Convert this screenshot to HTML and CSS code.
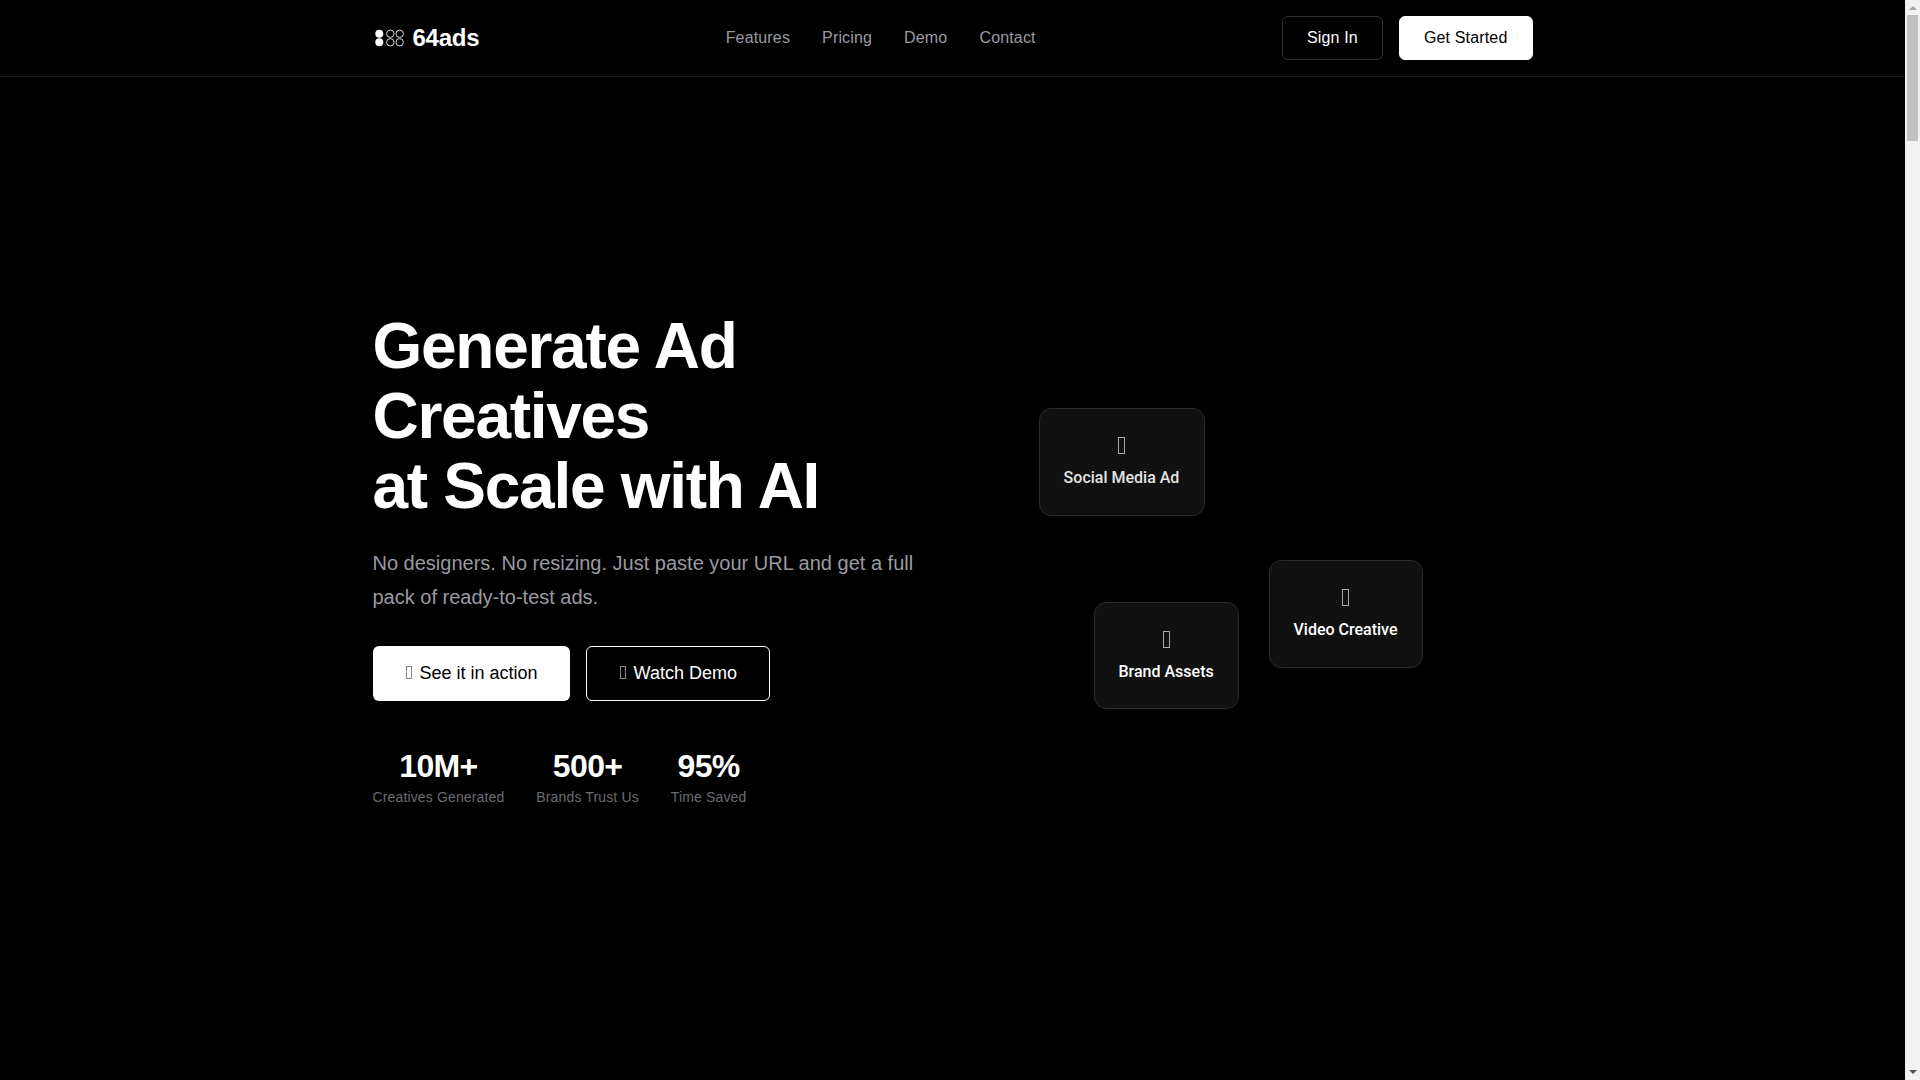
FILE: index.html
```html
<!DOCTYPE html>
<html lang="en">
<head>
  <meta charset="UTF-8">
  <meta name="viewport" content="width=device-width, initial-scale=1.0">
  <title>64ads</title>
  <link rel="stylesheet" href="styles.css">
</head>
<body>

<div class="page">
  <header class="navbar">
    <div class="container nav-inner">
      <a class="logo" href="#">
        <svg class="logo-mark" width="32" height="18" viewBox="0 0 32 18">
          <circle cx="6.3" cy="4.7" r="4" fill="#fff"/>
          <circle cx="6.3" cy="13.3" r="4" fill="#fff"/>
          <circle cx="17.3" cy="4.7" r="3.7" fill="none" stroke="#ddd"/>
          <circle cx="17.3" cy="13.3" r="3.7" fill="none" stroke="#ddd"/>
          <circle cx="26.7" cy="4.7" r="3.7" fill="none" stroke="#ddd"/>
          <circle cx="26.7" cy="13.3" r="3.7" fill="none" stroke="#ddd"/>
        </svg>
        <span>64ads</span>
      </a>
      <nav class="nav-links">
        <a href="#">Features</a>
        <a href="#">Pricing</a>
        <a href="#">Demo</a>
        <a href="#">Contact</a>
      </nav>
      <div class="nav-actions">
        <a class="btn btn-outline" href="#">Sign In</a>
        <a class="btn btn-white" href="#">Get Started</a>
      </div>
    </div>
  </header>

  <section class="hero">
    <div class="container hero-grid">
      <div class="hero-text">
        <h1>Generate Ad Creatives<br>at Scale with AI</h1>
        <p>No designers. No resizing. Just paste your URL and get a full pack of ready-to-test ads.</p>
        <div class="hero-buttons">
          <a class="btn btn-white btn-large" href="#"><i class="icon"></i>See it in action</a>
          <a class="btn btn-ghost btn-large" href="#"><i class="icon"></i>Watch Demo</a>
        </div>
        <div class="stats">
          <div class="stat"><strong>10M+</strong><span>Creatives Generated</span></div>
          <div class="stat"><strong>500+</strong><span>Brands Trust Us</span></div>
          <div class="stat"><strong>95%</strong><span>Time Saved</span></div>
        </div>
      </div>
      <div class="hero-visual">
        <div class="float-card card-social"><i class="icon"></i><span>Social Media Ad</span></div>
        <div class="float-card card-video"><i class="icon"></i><span>Video Creative</span></div>
        <div class="float-card card-brand"><i class="icon"></i><span>Brand Assets</span></div>
      </div>
    </div>
  </section>
</div>

<!-- page scrollbar -->
<aside class="scrollbar">
  <div class="arrow arrow-up"></div>
  <div class="thumb"></div>
  <div class="arrow arrow-down"></div>
</aside>

</body>
</html>
```

FILE: styles.css
```css
/* Reset */
* {
  margin: 0;
  padding: 0;
  box-sizing: border-box;
}

body {
  font-family: "Liberation Sans", Arial, sans-serif;
  background-color: #000;
  color: #fff;
  line-height: 1.6;
  display: flex;
  height: 100vh;
  overflow: hidden;
}

a {
  color: inherit;
  text-decoration: none;
}

/* Empty glyph box, the icon font never loaded */
i.icon {
  display: block;
  flex-shrink: 0;
  border: 1px solid #888;
}

.page {
  flex: 1;
  min-width: 0;
}

/* Scrollbar */
.scrollbar {
  width: 15px;
  flex-shrink: 0;
  background-color: #f1f1f1;
  display: flex;
  flex-direction: column;
  align-items: center;
}

.arrow {
  width: 0;
  height: 0;
  border-left: 4px solid transparent;
  border-right: 4px solid transparent;
}

.arrow-up {
  margin-top: 6px;
  border-bottom: 4px solid #a3a3a3;
}

.arrow-down {
  margin-bottom: 6px;
  border-top: 4px solid #505050;
}

.thumb {
  width: 11px;
  height: 126px;
  margin-top: 5px;
  margin-bottom: auto;
  background-color: #c1c1c1;
}

.container {
  width: 100%;
  max-width: 1200px;
  margin: 0 auto;
  padding: 0 20px;
}

/* Navbar */
.navbar {
  height: 77px;
  border-bottom: 1px solid #1a1a1a;
}

.nav-inner {
  height: 76px;
  display: flex;
  align-items: center;
  justify-content: space-between;
}

.logo {
  display: flex;
  align-items: center;
  gap: 8px;
  font-size: 24px;
  font-weight: 700;
  letter-spacing: -0.01em;
}

.logo-mark {
  display: block;
}

.nav-links {
  display: flex;
  gap: 32px;
  color: #9a9aa2;
  font-size: 16px;
  letter-spacing: 0.01em;
}

.nav-actions {
  display: flex;
  gap: 16px;
}

/* Buttons */
.btn {
  display: inline-flex;
  align-items: center;
  justify-content: center;
  height: 44px;
  padding: 0 24px;
  border-radius: 6px;
  font-size: 16px;
  letter-spacing: 0.01em;
}

.btn-outline {
  border: 1px solid #333;
  color: #fff;
}

.btn-white {
  background-color: #fff;
  border: 1px solid #fff;
  color: #000;
}

.btn-ghost {
  border: 1px solid #fff;
  color: #fff;
}

.btn-large {
  height: 55px;
  padding: 0 32px;
  font-size: 18px;
  letter-spacing: 0;
}

.btn-white.btn-large {
  border: none;
}

.btn-large .icon {
  width: 6px;
  height: 13px;
  margin: 0 8px 2px 1px;
}

/* Hero */
.hero {
  padding-top: 234px;
}

.hero-grid {
  display: grid;
  grid-template-columns: 1fr 1fr;
  gap: 64px;
}

h1 {
  font-size: 64px;
  line-height: 70px;
  font-weight: 700;
  letter-spacing: -0.02em;
  margin-bottom: 25px;
}

.hero-text p {
  font-size: 20px;
  line-height: 34px;
  color: #9a9aa2;
  margin-bottom: 32px;
}

.hero-buttons {
  display: flex;
  gap: 16px;
  margin-bottom: 48px;
}

.stats {
  display: flex;
  gap: 32px;
}

.stat {
  text-align: center;
}

.stat strong {
  display: block;
  font-size: 32px;
  line-height: 1.1;
  font-weight: 700;
  letter-spacing: -0.02em;
}

.stat span {
  display: block;
  font-size: 14px;
  color: #6b6b73;
  margin-top: 2px;
  letter-spacing: 0.01em;
}

/* Floating cards */
.hero-visual {
  position: relative;
  height: 500px;
}

.float-card {
  position: absolute;
  display: flex;
  flex-direction: column;
  align-items: center;
  padding: 24px;
  height: 108px;
  background-color: #111;
  border: 1px solid #2a2a2a;
  border-radius: 12px;
  font-family: Roboto, sans-serif;
  font-size: 16px;
  font-weight: 500;
}

.float-card .icon {
  width: 7px;
  height: 17px;
  margin: 4px 0 11px;
  border-color: #aaa;
}

.card-social {
  left: 54px;
  top: 97px;
  min-width: 166px;
  color: #e4e4e4;
}

.card-video {
  left: 284px;
  top: 249px;
}

.card-brand {
  left: 109px;
  top: 291px;
  height: 107px;
}
```
